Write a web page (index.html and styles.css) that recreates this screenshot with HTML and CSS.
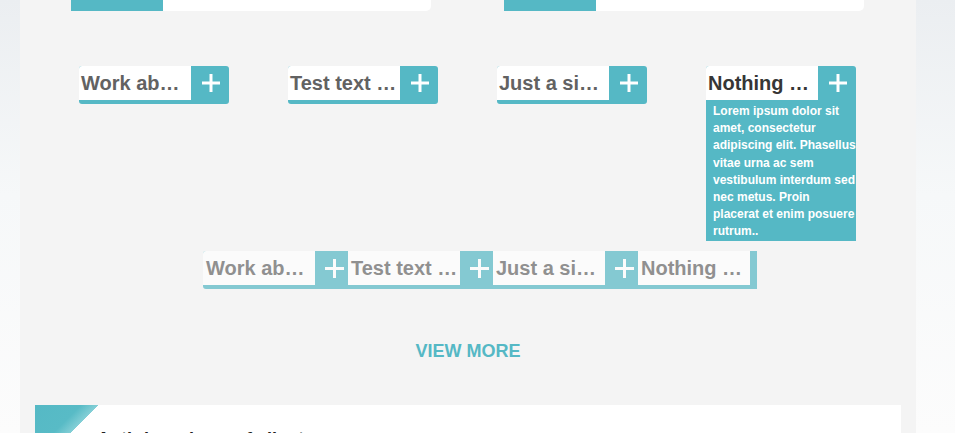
FILE: index.html
```html
<!DOCTYPE html>
<html lang="en">
<head>
<meta charset="utf-8">
<title>Tabs</title>
<link rel="stylesheet" href="styles.css">
</head>
<body>
<div class="page">
  <main class="main">
    <div class="top-cards">
      <div class="card"><div class="card-accent"></div></div>
      <div class="card"><div class="card-accent"></div></div>
    </div>

    <div class="tabs">
      <div class="tab">
        <div class="tab-head">
          <div class="tab-title">Work ab…</div>
          <div class="tab-plus"><svg width="18" height="18" viewBox="0 0 18 18"><path d="M9 0V18M0 9H18" stroke="#fff" stroke-width="3"/></svg></div>
        </div>
      </div>
      <div class="tab">
        <div class="tab-head">
          <div class="tab-title">Test text …</div>
          <div class="tab-plus"><svg width="18" height="18" viewBox="0 0 18 18"><path d="M9 0V18M0 9H18" stroke="#fff" stroke-width="3"/></svg></div>
        </div>
      </div>
      <div class="tab">
        <div class="tab-head">
          <div class="tab-title">Just a si…</div>
          <div class="tab-plus"><svg width="18" height="18" viewBox="0 0 18 18"><path d="M9 0V18M0 9H18" stroke="#fff" stroke-width="3"/></svg></div>
        </div>
      </div>
      <div class="tab tab-active">
        <div class="tab-head">
          <div class="tab-title">Nothing …</div>
          <div class="tab-plus"><svg width="18" height="18" viewBox="0 0 18 18"><path d="M9 0V18M0 9H18" stroke="#fff" stroke-width="3"/></svg></div>
        </div>
        <div class="tab-drop">Lorem ipsum dolor sit amet, consectetur adipiscing elit. Phasellus vitae urna ac sem vestibulum interdum sed nec metus. Proin placerat et enim posuere rutrum..</div>
      </div>
    </div>

    <div class="strip">
      <div class="strip-item">
        <div class="strip-title">Work ab…</div>
        <div class="strip-plus"><svg width="19" height="19" viewBox="0 0 19 19"><path d="M9.5 0V19M0 9.5H19" stroke="#fff" stroke-width="3"/></svg></div>
      </div>
      <div class="strip-item">
        <div class="strip-title">Test text …</div>
        <div class="strip-plus"><svg width="19" height="19" viewBox="0 0 19 19"><path d="M9.5 0V19M0 9.5H19" stroke="#fff" stroke-width="3"/></svg></div>
      </div>
      <div class="strip-item">
        <div class="strip-title">Just a si…</div>
        <div class="strip-plus"><svg width="19" height="19" viewBox="0 0 19 19"><path d="M9.5 0V19M0 9.5H19" stroke="#fff" stroke-width="3"/></svg></div>
      </div>
      <div class="strip-item">
        <div class="strip-title">Nothing …</div>
        <div class="strip-plus"><svg width="19" height="19" viewBox="0 0 19 19"><path d="M9.5 0V19M0 9.5H19" stroke="#fff" stroke-width="3"/></svg></div>
      </div>
    </div>

    <a class="view-more" href="#">VIEW MORE</a>

    <section class="bottom-card">
      <div class="ribbon"></div>
      <h2 class="bottom-title">Anti-drop down of clients</h2>
    </section>
  </main>
</div>
</body>
</html>
```

FILE: styles.css
```css
* { box-sizing: border-box; }

html, body {
  margin: 0;
  height: 100%;
  overflow: hidden;
}

body {
  background: linear-gradient(to bottom, #ebeef1 0%, #f6f8f9 45%, #fcfcfc 100%);
  font-family: "Liberation Sans", Arial, sans-serif;
}

.page {
  padding-left: 20px;
}

.main {
  width: 896px;
  height: 433px;
  background: #f4f4f4;
  overflow: hidden;
}

.top-cards {
  display: flex;
  justify-content: center;
  gap: 73px;
  padding-right: 1px;
}

.card {
  width: 360px;
  height: 11px;
  background: #fff;
  border-radius: 0 0 5px 0;
  display: flex;
}

.card-accent {
  width: 92px;
  background: #55b8c5;
}

.tabs {
  display: flex;
  justify-content: center;
  gap: 59px;
  margin-top: 55px;
  padding-right: 1px;
}

.tab {
  width: 150px;
  position: relative;
}

.tab-head {
  display: flex;
  background: #55b8c5;
  padding-bottom: 4px;
  border-radius: 3px;
  overflow: hidden;
}

.tab-title {
  flex: 1;
  height: 34px;
  line-height: 35px;
  padding-left: 2px;
  background: #fff;
  font-size: 20px;
  font-weight: bold;
  color: #626262;
  white-space: nowrap;
  overflow: hidden;
}

.tab-plus {
  width: 38px;
  height: 34px;
  display: flex;
  align-items: center;
  justify-content: center;
  padding-left: 2px;
}

.tab-plus svg { display: block; }

.tab-active .tab-title { color: #363636; }

.tab-active .tab-head { border-radius: 3px 3px 0 0; }

.tab-drop {
  position: absolute;
  top: 100%;
  left: 0;
  width: 150px;
  margin-top: -1px;
  padding: 0 0 0 7px;
  background: #55b8c5;
  color: #fff;
  font-size: 12px;
  font-weight: bold;
  line-height: 17.2px;
}

.strip {
  display: flex;
  width: 554px;
  margin: 147px 0 0 183px;
  overflow: hidden;
  opacity: 0.7;
  border-radius: 3px 0 0 3px;
}

.strip-item {
  flex: 0 0 150px;
  display: flex;
  margin-right: -5px;
  background: #55b8c5;
  padding-bottom: 4px;
}

.strip-item:nth-child(2),
.strip-item:nth-child(3),
.strip-item:nth-child(4) { position: relative; }

.strip-title {
  flex: 0 0 112px;
  height: 34px;
  line-height: 35px;
  padding-left: 3px;
  background: #fff;
  font-size: 20px;
  font-weight: bold;
  color: #666;
  white-space: nowrap;
  overflow: hidden;
}

.strip-plus {
  flex: 1;
  height: 34px;
  display: flex;
  align-items: center;
  justify-content: center;
}

.strip-plus svg { display: block; }

.view-more {
  display: block;
  margin-top: 52px;
  text-align: center;
  font-size: 18px;
  font-weight: bold;
  line-height: 20px;
  color: #55b8c5;
  text-decoration: none;
}

.bottom-card {
  position: relative;
  margin: 44px 15px 0;
  height: 120px;
  background: #fff;
  padding: 24px 0 0 62px;
}

.ribbon {
  position: absolute;
  top: 0;
  left: 0;
  width: 64px;
  height: 64px;
  clip-path: polygon(0 0, 100% 0, 0 100%);
  background: linear-gradient(135deg, #55b9c5 0%, #58bbc6 36%, #86d0d7 50%, #ffffff 50%);
}

.bottom-title {
  position: relative;
  margin: 0;
  font-size: 18px;
  line-height: 20px;
  font-weight: bold;
  color: #222;
}
```
